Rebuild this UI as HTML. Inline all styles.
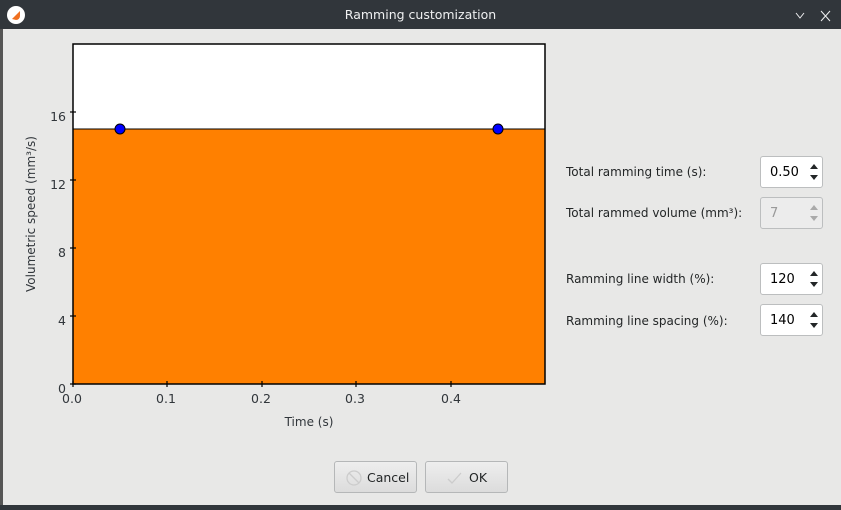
<!DOCTYPE html>
<html><head><style>
body{margin:0;width:841px;height:510px;overflow:hidden;background:#e8e8e7;font-family:"DejaVu Sans","Liberation Sans",sans-serif;position:relative}
.tb{position:absolute;left:0;top:0;width:841px;height:29px;background:#31363b;color:#eff0f1;font-size:12.5px}
.lb{position:absolute;font-size:12px;color:#232627}
.spin{position:absolute;left:760px;width:63px;height:32px;background:#fff;border:1px solid #bcbebf;border-radius:3px;box-sizing:border-box;font-size:13px}
.spin span{position:absolute;left:9px;top:8px}
.spin i{position:absolute;right:4px;width:0;height:0;border-left:4px solid transparent;border-right:4px solid transparent}
.up{top:7px;border-bottom:5px solid #232627}.dn{bottom:7px;border-top:5px solid #232627}
.dis{background:#ececec;color:#999}.dis .up{border-bottom-color:#aaa}.dis .dn{border-top-color:#aaa}
.btn{position:absolute;top:461px;height:32px;border:1px solid #b5b7b8;border-radius:3px;background:linear-gradient(#eeeeee,#dcdcdc);box-sizing:border-box;font-size:12.5px;color:#232627}
</style></head><body>
<div class="tb">
<svg style="position:absolute;left:6px;top:5px" width="20" height="20" viewBox="0 0 20 20"><circle cx="10" cy="10" r="9" fill="#fff"/><path d="M6 14 L14 6 L14 11 A4 4 0 0 1 10 15 Z" fill="#f07020"/></svg>
<div style="position:absolute;left:0;width:841px;top:7px;text-align:center">Ramming customization</div>
<svg style="position:absolute;left:794px;top:10px" width="40" height="12"><path d="M2 3 L6 8 L10 3" stroke="#eff0f1" fill="none"/><path d="M27 1 L36 11 M36 1 L27 11" stroke="#eff0f1" fill="none"/></svg>
</div>
<div style="position:absolute;left:0;top:29px;width:3px;height:481px;background:#555"></div>
<div style="position:absolute;left:0;top:505px;width:841px;height:5px;background:#31363b"></div>
<svg style="position:absolute;left:0;top:29px" width="560" height="420" font-family="DejaVu Sans, Liberation Sans, sans-serif" font-size="12.5" fill="#31363b">
<g transform="translate(0,-29)">
<rect x="73" y="44" width="472" height="340" fill="#fff"/>
<rect x="73" y="129" width="472" height="255" fill="#ff8000"/>
<line x1="73" y1="129" x2="545" y2="129" stroke="#000"/>
<rect x="73" y="44" width="472" height="340" fill="none" stroke="#000" stroke-width="1.5"/>
<g stroke="#000" stroke-width="1.2">
<line x1="70" y1="112" x2="76" y2="112"/><line x1="70" y1="180" x2="76" y2="180"/><line x1="70" y1="248" x2="76" y2="248"/><line x1="70" y1="316" x2="76" y2="316"/><line x1="70" y1="384" x2="76" y2="384"/>
<line x1="73" y1="381" x2="73" y2="387"/><line x1="167" y1="381" x2="167" y2="387"/><line x1="262" y1="381" x2="262" y2="387"/><line x1="356" y1="381" x2="356" y2="387"/><line x1="451" y1="381" x2="451" y2="387"/>
</g>
<circle cx="120" cy="129" r="5" fill="#0000ff" stroke="#000"/>
<circle cx="498" cy="129" r="5" fill="#0000ff" stroke="#000"/>
<g text-anchor="end"><text x="66" y="121">16</text><text x="66" y="189">12</text><text x="66" y="257">8</text><text x="66" y="325">4</text><text x="66" y="393">0</text></g>
<g text-anchor="middle"><text x="72" y="403">0.0</text><text x="166" y="403">0.1</text><text x="261" y="403">0.2</text><text x="355" y="403">0.3</text><text x="451" y="403">0.4</text>
<text x="309" y="426" font-size="12">Time (s)</text>
<text transform="translate(35,214) rotate(-90)" font-size="12">Volumetric speed (mm³/s)</text></g>
</g></svg>
<div class="lb" style="left:566px;top:165px">Total ramming time (s):</div>
<div class="lb" style="left:566px;top:206px">Total rammed volume (mm³):</div>
<div class="lb" style="left:566px;top:272px">Ramming line width (%):</div>
<div class="lb" style="left:566px;top:314px">Ramming line spacing (%):</div>
<div class="spin" style="top:156px"><span>0.50</span><i class="up"></i><i class="dn"></i></div>
<div class="spin dis" style="top:197px"><span>7</span><i class="up"></i><i class="dn"></i></div>
<div class="spin" style="top:263px"><span>120</span><i class="up"></i><i class="dn"></i></div>
<div class="spin" style="top:304px"><span>140</span><i class="up"></i><i class="dn"></i></div>
<div class="btn" style="left:334px;width:83px"><svg style="position:absolute;left:11px;top:8px" width="16" height="16"><circle cx="8" cy="8" r="7" fill="none" stroke="#ccc" stroke-width="1.3"/><path d="M3 3 L13 13" stroke="#ccc" stroke-width="1.3"/></svg><span style="position:absolute;left:32px;top:8px">Cancel</span></div>
<div class="btn" style="left:425px;width:83px"><svg style="position:absolute;left:20px;top:8px" width="18" height="16"><path d="M2 9 L6 13 L15 3" fill="none" stroke="#ccc" stroke-width="1.3"/></svg><span style="position:absolute;left:43px;top:8px">OK</span></div>
</body></html>
